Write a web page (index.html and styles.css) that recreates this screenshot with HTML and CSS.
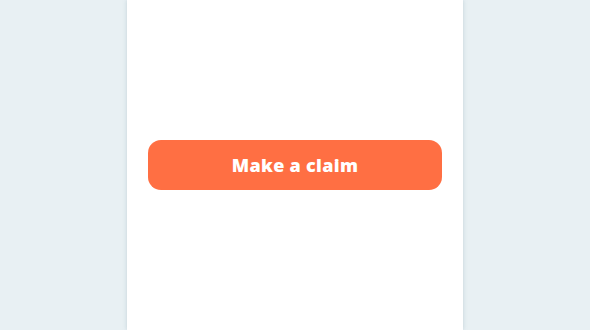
FILE: index.html
```html
<!DOCTYPE html>
<html>
<head>
<meta charset="utf-8">
<link rel="stylesheet" href="styles.css">
</head>
<body>
<div class="page">
  <main class="panel">
    <button class="claim-btn">Make a claim</button>
  </main>
</div>
</body>
</html>
```
FILE: styles.css
```css
html, body {
  margin: 0;
  padding: 0;
  height: 100%;
}
body {
  background: #e8f0f3;
  font-family: "Lato", "Noto Sans", sans-serif;
}
.page {
  display: flex;
  justify-content: center;
  height: 100%;
}
.panel {
  width: 336px;
  background: #ffffff;
  box-shadow: 0 0 4px rgba(120, 150, 165, 0.35);
  display: flex;
  flex-direction: column;
  justify-content: center;
  padding: 0 21px;
  box-sizing: border-box;
}
.claim-btn {
  height: 50px;
  border: none;
  border-radius: 13px;
  background: #ff6f43;
  color: #ffffff;
  font-family: "Open Sans", "Noto Sans", sans-serif;
  font-weight: 800;
  font-size: 18px;
  letter-spacing: 0.3px;
  padding: 0 0 1px 0;
  cursor: pointer;
}
```
